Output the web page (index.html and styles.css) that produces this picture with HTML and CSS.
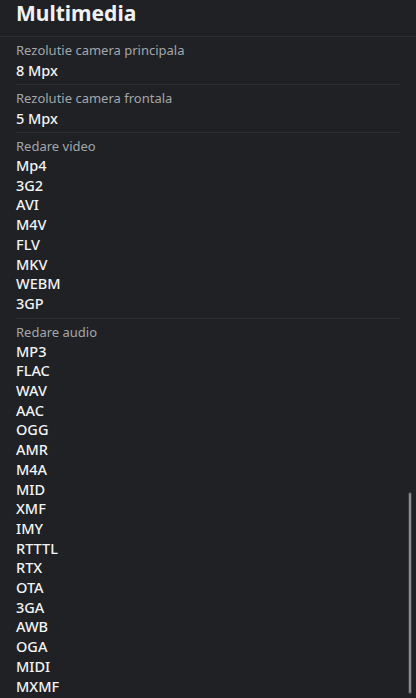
FILE: index.html
```html
<!DOCTYPE html>
<html lang="ro">
<head>
    <meta charset="UTF-8">
    <meta name="viewport" content="width=device-width, initial-scale=1.0">
    <title>Multimedia</title>
    <link rel="stylesheet" href="styles.css">
</head>
<body>
    <div class="header">
        <h2>Multimedia</h2>
    </div>
    <div class="specs">
        <div class="spec">
            <div class="label">Rezolutie camera principala</div>
            <div class="value">8 Mpx</div>
        </div>
        <div class="spec">
            <div class="label">Rezolutie camera frontala</div>
            <div class="value">5 Mpx</div>
        </div>
        <div class="spec">
            <div class="label">Redare video</div>
            <ul class="values">
                <li>Mp4</li>
                <li>3G2</li>
                <li>AVI</li>
                <li>M4V</li>
                <li>FLV</li>
                <li>MKV</li>
                <li>WEBM</li>
                <li>3GP</li>
            </ul>
        </div>
        <div class="spec last">
            <div class="label">Redare audio</div>
            <ul class="values">
                <li>MP3</li>
                <li>FLAC</li>
                <li>WAV</li>
                <li>AAC</li>
                <li>OGG</li>
                <li>AMR</li>
                <li>M4A</li>
                <li>MID</li>
                <li>XMF</li>
                <li>IMY</li>
                <li>RTTTL</li>
                <li>RTX</li>
                <li>OTA</li>
                <li>3GA</li>
                <li>AWB</li>
                <li>OGA</li>
                <li>MIDI</li>
                <li>MXMF</li>
            </ul>
        </div>
    </div>
    <div class="scroll-thumb"></div>
</body>
</html>
```
FILE: styles.css
```css
body {
    font-family: "Noto Sans", "Open Sans", sans-serif;
    margin: 0;
    padding: 0;
    background-color: #1f2124;
    color: #f2f3f4;
    height: 698px;
    overflow: hidden;
}
.header {
    border-bottom: 1px solid #2b2e31;
    padding: 0 16px;
    height: 36px;
}
.header h2 {
    margin: 0;
    font-size: 21px;
    font-weight: 700;
    line-height: 26px;
    color: #f0f1f2;
}
.specs {
    padding: 0 16px;
}
.spec {
    border-bottom: 1px solid #2b2e31;
    padding: 3px 0 4px 0;
}
.spec.last {
    border-bottom: none;
}
.label {
    font-size: 13px;
    line-height: 20px;
    color: #a3a7ab;
}
.value {
    font-size: 14.5px;
    font-weight: 500;
    line-height: 20px;
}
.values {
    list-style-type: none;
    margin: 0;
    padding: 0;
}
.values li {
    font-size: 14.5px;
    font-weight: 500;
    line-height: 19.7px;
}
.scroll-thumb {
    position: absolute;
    right: 4px;
    top: 492px;
    width: 2px;
    height: 200px;
    background-color: #8c8c8c;
    border: 1px solid #3a3c3f;
    border-radius: 2px;
}
```
